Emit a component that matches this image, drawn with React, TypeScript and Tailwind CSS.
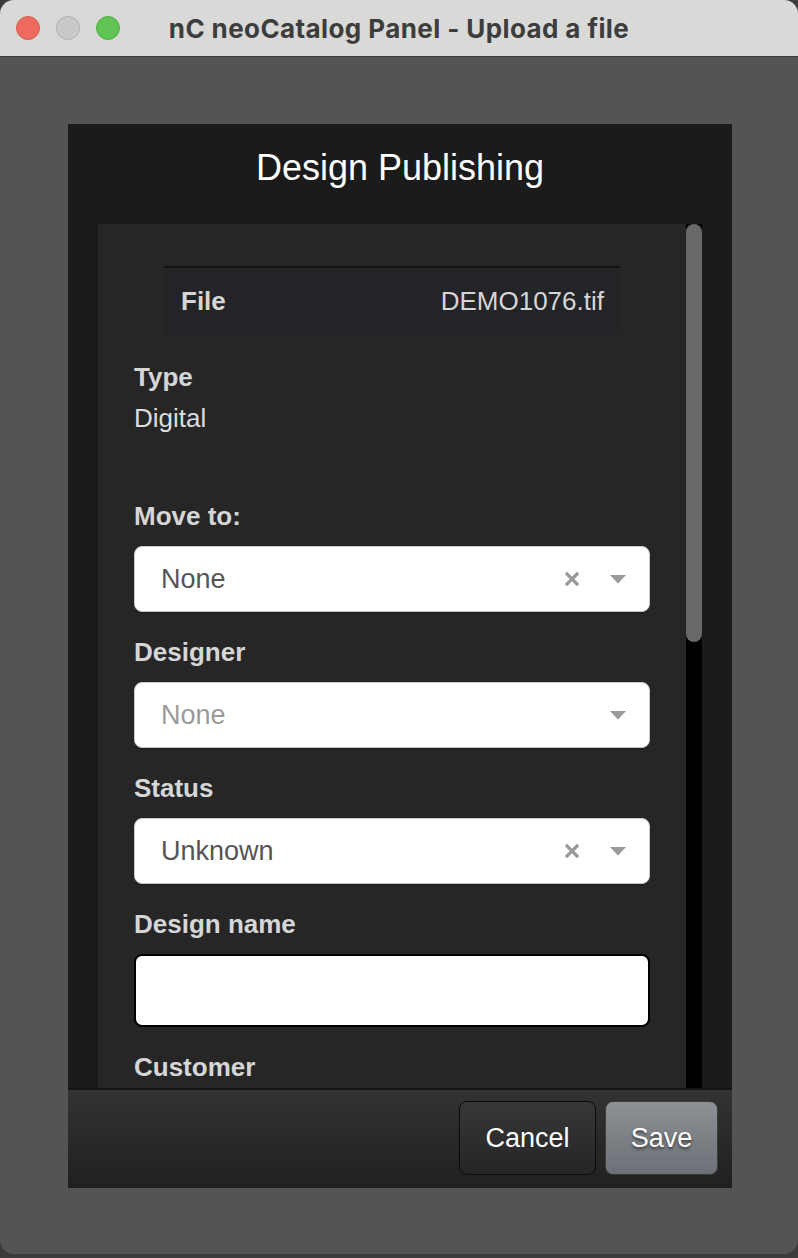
const labelCls = "text-[26px] leading-[26px] font-bold text-[#d6d6d6]"

function ClearIcon() {
  return (
    <svg width="14" height="14" viewBox="0 0 14 14" className="shrink-0">
      <path d="M2 2 L12 12 M12 2 L2 12" stroke="#999" strokeWidth="3.2" strokeLinecap="square" />
    </svg>
  )
}

function Caret() {
  return (
    <svg width="16" height="9" viewBox="0 0 16 9" className="shrink-0">
      <polygon points="0,0 16,0 8,8.5" fill="#999" />
    </svg>
  )
}

function SelectBox({ value, placeholder, clearable }: { value: string; placeholder?: boolean; clearable?: boolean }) {
  return (
    <div className="h-[66px] bg-white rounded-[8px] border border-[#c8c8c8] shadow-[0_1px_1px_rgba(0,0,0,0.35)] flex items-center pl-[26px] pr-[23px]">
      <span className={`flex-1 text-[27px] leading-none ${placeholder ? "text-[#9a9a9a]" : "text-[#555]"}`}>{value}</span>
      {clearable && <span className="mr-[31px] flex"><ClearIcon /></span>}
      <Caret />
    </div>
  )
}

function Field({ label, children }: { label: string; children: React.ReactNode }) {
  return (
    <div className="mb-[27px]">
      <div className={`${labelCls} mb-[17px]`}>{label}</div>
      {children}
    </div>
  )
}

export default function App() {
  return (
    <div className="w-[798px] h-[1258px] bg-[#3b3b3b] overflow-hidden font-['Liberation_Sans',Arial,sans-serif]">
      <div className="w-[798px] h-[1254px] bg-[#545454] rounded-[14px] overflow-hidden flex flex-col">
        {/* title bar */}
        <div className="h-[57px] shrink-0 bg-[#d9dad7] border-b border-[#3a3a3a] flex items-center">
          <div className="w-[136px] flex items-center gap-[16px] pl-[16px]">
            <span className="w-[24px] h-[24px] rounded-full bg-[#ef6a5e] border border-[#d85a4f]" />
            <span className="w-[24px] h-[24px] rounded-full bg-[#c9c9c7] border border-[#b0b0ae]" />
            <span className="w-[24px] h-[24px] rounded-full bg-[#5fc454] border border-[#4fae45]" />
          </div>
          <div className="flex-1 text-center text-[26px] font-bold text-[#3d3d3d] font-['Inter',sans-serif] tracking-[0.4px]">
            nC neoCatalog Panel - Upload a file
          </div>
          <div className="w-[136px]" />
        </div>

        <div className="flex-1 pt-[67px] pl-[68px] pr-[66px]">
          <div className="h-[1064px] bg-[#1b1b1b] flex flex-col">
            <div className="h-[100px] shrink-0 pt-[24px] text-center text-[36px] leading-[40px] text-white">
              Design Publishing
            </div>

            <div className="flex-1 min-h-0 flex pl-[30px] pr-[30px]">
              <div className="flex-1 bg-[#262626] overflow-hidden pt-[42px] px-[36px]">
                <div className="mx-[30px] h-[68px] border-t-2 border-[#121212] bg-[#232427] flex items-center justify-between pl-[17px] pr-[16px]">
                  <span className="text-[26px] font-bold text-[#d6d6d6]">File</span>
                  <span className="text-[26px] text-[#d6d6d6]">DEMO1076.tif</span>
                </div>

                <div className={`${labelCls} mt-[30px]`}>Type</div>
                <div className="text-[26px] leading-[26px] text-[#dcdcdc] mt-[15px]">Digital</div>

                <div className="mt-[72px]">
                  <Field label="Move to:">
                    <SelectBox value="None" clearable />
                  </Field>
                  <Field label="Designer">
                    <SelectBox value="None" placeholder />
                  </Field>
                  <Field label="Status">
                    <SelectBox value="Unknown" clearable />
                  </Field>
                  <Field label="Design name">
                    <div className="h-[73px] bg-white rounded-[8px] border-2 border-black" />
                  </Field>
                  <Field label="Customer">
                    <SelectBox value="" />
                  </Field>
                </div>
              </div>
              <div className="w-[16px] bg-black">
                <div className="h-[418px] bg-[#686868] rounded-full" />
              </div>
            </div>

            <div className="h-[100px] shrink-0 border-t-2 border-[#141414] bg-gradient-to-b from-[#333333] to-[#202020] flex justify-end items-start pt-[11px] pr-[14px] gap-[9px]">
              <button className="w-[137px] h-[74px] rounded-[8px] border border-[#0b0b0b] bg-gradient-to-b from-[#383838] to-[#252525] text-[27px] text-white">
                Cancel
              </button>
              <button className="w-[113px] h-[74px] rounded-[8px] border border-[#3c3c3c] bg-gradient-to-b from-[#8d9195] to-[#6c7177] text-[27px] text-white [text-shadow:0_2px_3px_rgba(0,0,0,0.55)]">
                Save
              </button>
            </div>
          </div>
        </div>
      </div>
    </div>
  )
}
